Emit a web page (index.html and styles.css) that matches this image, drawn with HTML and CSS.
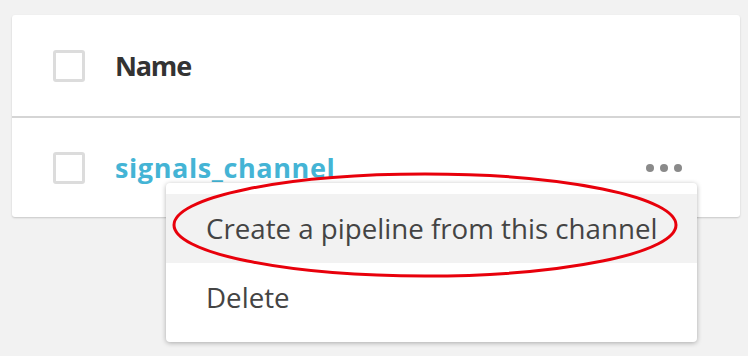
FILE: index.html
```html
<!DOCTYPE html>
<html lang="en">
<head>
    <meta charset="UTF-8">
    <title>Channels</title>
    <link rel="stylesheet" href="styles.css">
</head>
<body>
    <div class="stage">
        <div class="table-card">
            <div class="table-row header-row">
                <span class="checkbox"></span>
                <span class="col-name">Name</span>
            </div>
            <div class="table-row">
                <span class="checkbox"></span>
                <a class="channel-link" href="#">signals_channel</a>
                <span class="row-actions">
                    <span class="dot"></span><span class="dot"></span><span class="dot"></span>
                </span>
            </div>
        </div>

        <div class="action-menu">
            <div class="menu-item active">Create a pipeline from this channel</div>
            <div class="menu-item">Delete</div>
        </div>

        <!-- annotation ring around the first menu item -->
        <svg class="highlight-ring" width="748" height="356" viewBox="0 0 748 356">
            <ellipse cx="425" cy="225" rx="251" ry="51" fill="none" stroke="#e8000b" stroke-width="3"/>
        </svg>
    </div>
</body>
</html>
```

FILE: styles.css
```css
html, body {
    margin: 0;
    height: 100%;
}
body {
    background-color: #f2f2f2;
    font-family: "Open Sans", sans-serif;
    color: #444;
}
.stage {
    position: relative;
    height: 356px;
    padding: 15px 8px 0 12px;
    box-sizing: border-box;
}
.table-card {
    width: 728px;
    background-color: white;
    border-radius: 3px;
    box-shadow: 0 1px 2px rgba(0,0,0,0.18);
}
.table-row {
    display: flex;
    align-items: center;
    height: 99px;
    padding-left: 41px;
}
.header-row {
    height: 101px;
    border-bottom: 2px solid #d5d5d5;
}
.checkbox {
    width: 26px;
    height: 26px;
    border: 3px solid #dcdcdc;
    border-radius: 3px;
    margin-right: 30px;
}
.col-name {
    font-size: 27px;
    font-weight: 700;
    letter-spacing: -1.2px;
    color: #333;
}
.channel-link {
    font-size: 27px;
    font-weight: 700;
    letter-spacing: 0.6px;
    color: #44b4d5;
    text-decoration: none;
}
.row-actions {
    display: flex;
    gap: 6px;
    margin-left: auto;
    margin-right: 58px;
}
.dot {
    width: 8px;
    height: 8px;
    border-radius: 50%;
    background-color: #8a8a8a;
}
.action-menu {
    position: absolute;
    z-index: 1;
    left: 166px;
    top: 183px;
    width: 531px;
    padding: 11px 0 10px;
    background-color: white;
    border-radius: 4px;
    box-shadow: 0 1px 5px rgba(0,0,0,0.3);
}
.menu-item {
    height: 69px;
    line-height: 69px;
    padding-left: 40px;
    font-size: 27.7px;
    color: #444;
}
.menu-item.active {
    background-color: #f2f2f2;
}
.highlight-ring {
    position: absolute;
    z-index: 2;
    left: 0;
    top: 0;
}
```
